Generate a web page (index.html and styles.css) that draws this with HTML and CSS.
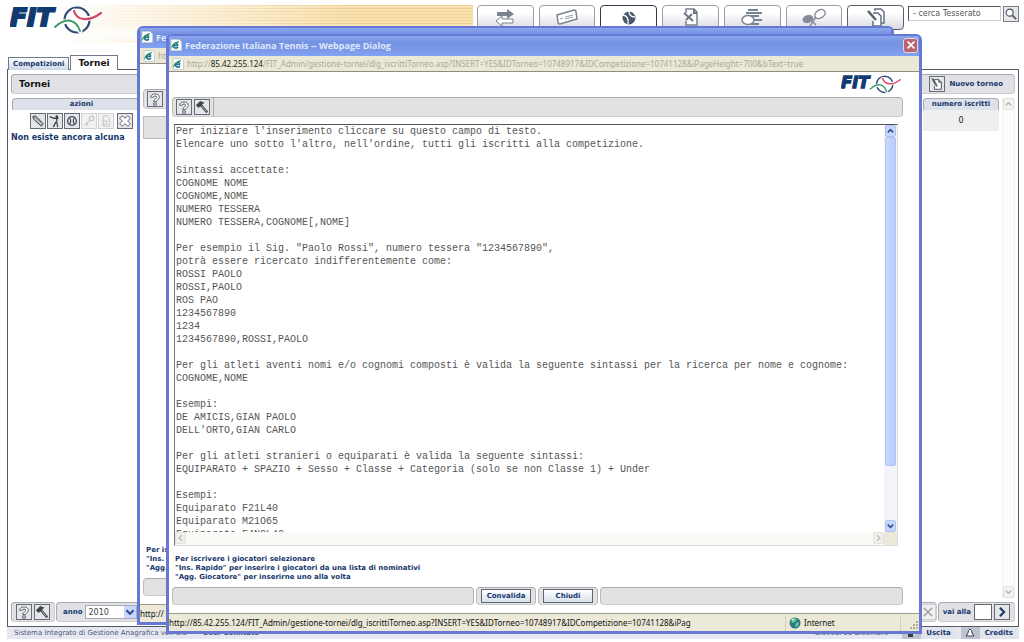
FILE: index.html
```html
<!DOCTYPE html>
<html lang="it">
<head>
<meta charset="utf-8">
<title>Federazione Italiana Tennis</title>
<link rel="stylesheet" href="styles.css">
</head>
<body>
<svg class="defs" aria-hidden="true">
  <symbol id="logo" viewBox="0 0 92 32" overflow="visible">
    <text class="logo-text" x="0" y="21">FIT</text>
    <g fill="none" stroke-linecap="round">
      <circle cx="67" cy="15" r="12.500" stroke="#2f4a78" stroke-width="2.200"/>
      <path d="M46 22C56 13 66 15 70 26M64 6C67 15 78 17 91 8" stroke="#fff" stroke-width="5"/>
      <path d="M45 22C56 12 66 14 70 26" stroke="#3d9a68" stroke-width="2"/>
      <path d="M64 6C67 16 79 17 91 8" stroke="#d34a62" stroke-width="2.200"/>
    </g>
  </symbol>
  <symbol id="help" viewBox="0 0 16 16"><path d="M3 6C3 1 13 1 13 6C13 9 9.500 9 9.500 11H6.500C6.500 8 10 8 10 6C10 4 6 4 6 6ZM6.500 12.500H9.500V15H6.500Z" fill="#fff" stroke="#4c5260"/></symbol>
  <symbol id="hammer" viewBox="0 0 16 16"><path d="M1 6L6 1L11 3L8 5L15 13L13 15L6 7L4 9Z" fill="#3f454f"/><path d="M8 7L13 13" stroke="#fff" stroke-width=".7"/></symbol>
  <symbol id="pencil" viewBox="0 0 16 16"><path d="M2 3L5 2L14 11L12 14L3 6Z" fill="#99a0ab" stroke="#333946"/><path d="M4 5L12 12" stroke="#fff" stroke-width=".8"/></symbol>
  <symbol id="player" viewBox="0 0 16 16"><path d="M2 3L7 5H10V9L11 15M9 9L6 15M10 6L12 4" fill="none" stroke="#343a45" stroke-width="1.300"/><circle cx="10" cy="3" r="1.500" fill="#343a45"/></symbol>
  <symbol id="ball" viewBox="0 0 16 16"><circle cx="8" cy="8" r="5" fill="#e8ebef" stroke="#3c4250" stroke-width="1.500"/><path d="M5 4Q8 8 5 12M11 4Q8 8 11 12" fill="none" stroke="#3c4250" stroke-width="1.400"/></symbol>
  <symbol id="key" viewBox="0 0 16 16"><circle cx="11" cy="5" r="2.500" fill="none" stroke="#c3c5c9" stroke-width="1.300"/><path d="M9 7L3 13M5 11L7 13" stroke="#c3c5c9" stroke-width="1.500"/></symbol>
  <symbol id="sheet" viewBox="0 0 16 16"><path d="M5 2H10L12 5V14H5ZM3 8H9V12H3" fill="none" stroke="#c3c5c9"/></symbol>
  <symbol id="cross" viewBox="0 0 16 16"><path d="M2 5L5 2L8 5L11 2L14 5L11 8L14 11L11 14L8 11L5 14L2 11L5 8Z" fill="#fff" stroke="#4c5260"/></symbol>
  <symbol id="newdoc" viewBox="0 0 16 16"><path d="M5 3H10L13 6V14H5V10M10 3V6H13" fill="#fff" stroke="#3c4250"/><path d="M2 2L4 2L8 9L8 11L6 9Z" fill="#596270" stroke="#3c4250" stroke-width=".6"/></symbol>
  <symbol id="ie" viewBox="0 0 12 12"><path d="M1 .5H9L11.500 3V11.500H1Z" fill="#fff" stroke="#c6cfcf"/><path d="M8 8Q7 9.500 5 9Q3 8 3.500 6Q4.500 4 6.500 4.500Q8 5 7.500 6.500H4" fill="none" stroke="#1f7390" stroke-width="1.500"/><path d="M2 9Q1 8 4 5Q7 2.500 9 3" fill="none" stroke="#2c8f5c" stroke-width="1.100"/></symbol>
  <symbol id="up" viewBox="0 0 10 10"><path d="M2 6.500L5 3.500L8 6.500" fill="none" stroke="currentColor" stroke-width="1.800"/></symbol>
  <symbol id="down" viewBox="0 0 10 10"><path d="M2 3.500L5 6.500L8 3.500" fill="none" stroke="currentColor" stroke-width="1.800"/></symbol>
  <symbol id="left" viewBox="0 0 10 10"><path d="M6.500 2L3.500 5L6.500 8" fill="none" stroke="currentColor" stroke-width="1.500"/></symbol>
  <symbol id="right" viewBox="0 0 10 10"><path d="M3.500 2L6.500 5L3.500 8" fill="none" stroke="currentColor" stroke-width="1.500"/></symbol>
  <symbol id="last" viewBox="0 0 10 10"><path d="M2 2L5 5L2 8M8 2L5 5L8 8" fill="none" stroke="currentColor" stroke-width="1.200"/></symbol>
</svg>

<div class="app">
  <header class="header">
    <div class="brand"><svg class="brand-logo" role="img" aria-label="FIT"><use href="#logo"/></svg></div>
    <nav class="nav" aria-label="Sezioni">
      <button class="nav-tab" aria-label="Trasferimenti"><svg viewBox="0 0 24 18"><path d="M4 4H14V1L21 6L14 11V8H4Z" fill="#7a8291"/><path d="M20 11H9V8L3 13L9 18V15H20Z" fill="#fff" stroke="#7a8291"/></svg></button>
      <button class="nav-tab" aria-label="Tessere"><svg viewBox="0 0 24 18"><path d="M2 7L19 2Q21 2 21 4L22 11L5 16Q3 16 3 14Z" fill="#fff" stroke="#7a8291" stroke-width="1.500"/><path d="M5 11L8 10M10 9L18 7M10 11L18 9" stroke="#a0a6b1" stroke-width="1.200"/></svg></button>
      <button class="nav-tab nav-tab-current" aria-label="Tornei"><svg viewBox="0 0 24 18"><circle cx="12" cy="10" r="6.500" fill="#4a586d"/><path d="M6 7Q12 8 11 16M12 3Q12 9 18 9" fill="none" stroke="#fff" stroke-width="1.300"/></svg></button>
      <button class="nav-tab" aria-label="Documenti"><svg viewBox="0 0 24 18"><path d="M7 5V1H15L18 4V17H7V13" fill="#fff" stroke="#7a8291" stroke-width="1.500"/><path d="M5 5L14 13M13 6L7 12M15 1V5H18" stroke="#6c7585" stroke-width="2" fill="none"/></svg></button>
      <button class="nav-tab" aria-label="Circoli"><svg viewBox="0 0 24 18"><path d="M8 2H18M6 5H22M11 8H19M11 12H22M10 16H19" stroke="#7a8291" stroke-width="2"/><ellipse cx="8" cy="12" rx="6" ry="4.500" fill="#fff" stroke="#7a8291" stroke-width="1.500"/></svg></button>
      <button class="nav-tab" aria-label="Racchette"><svg viewBox="0 0 24 18"><ellipse cx="18" cy="6" rx="5.500" ry="4" fill="#fff" stroke="#858c9a" stroke-width="1.500" transform="rotate(-30 18 6)"/><ellipse cx="6" cy="11" rx="5.500" ry="4" fill="#858c9a" transform="rotate(-15 6 11)"/><path d="M14 9L8 18M10 13L14 17" stroke="#858c9a" stroke-width="1.500"/></svg></button>
      <button class="nav-tab nav-tab-dark" aria-label="Iscrizioni"><svg viewBox="0 0 24 18"><path d="M11 3V1H17L20 4V15H17M9 5H14L17 8V18H9V13" fill="#fff" stroke="#667082" stroke-width="1.500"/><path d="M4 3L12 12" stroke="#566073" stroke-width="2.500"/></svg></button>
    </nav>
    <form class="search">
      <input class="search-input" type="text" value="- cerca Tesserato" aria-label="Cerca Tesserato">
      <button class="search-button" type="button" aria-label="Cerca"><svg viewBox="0 0 16 16"><circle cx="6.500" cy="6.500" r="4" fill="#fff" stroke="#4c5563" stroke-width="1.300"/><path d="M9.500 9.500L14 14" stroke="#4c5563" stroke-width="2"/></svg></button>
    </form>
  </header>

  <div class="page-tabs">
    <button class="page-tab">Competizioni</button>
    <button class="page-tab page-tab-current">Tornei</button>
  </div>

  <main class="panel">
    <div class="panel-title">
      <h1 class="panel-name">Tornei</h1>
      <button class="new-button"><span class="tool"><svg><use href="#newdoc"/></svg></span>Nuovo torneo</button>
    </div>
    <div class="list">
      <table class="grid">
        <thead><tr><th class="col-actions">azioni</th><th class="col-rest"></th><th class="col-count">numero iscritti</th></tr></thead>
        <tbody><tr>
          <td><div class="actions">
            <button class="tool" aria-label="Modifica"><svg><use href="#pencil"/></svg></button>
            <button class="tool" aria-label="Giocatori"><svg><use href="#player"/></svg></button>
            <button class="tool" aria-label="Gare"><svg><use href="#ball"/></svg></button>
            <button class="tool tool-off" aria-label="Chiave" disabled><svg><use href="#key"/></svg></button>
            <button class="tool tool-off" aria-label="Stampa" disabled><svg><use href="#sheet"/></svg></button>
            <button class="tool" aria-label="Elimina"><svg><use href="#cross"/></svg></button>
          </div></td>
          <td></td>
          <td class="count"><span>0</span></td>
        </tr></tbody>
      </table>
      <div class="scroll scroll-off"><svg><use href="#up"/></svg><svg><use href="#down"/></svg></div>
      <p class="empty">Non esiste ancora alcuna</p>
    </div>
    <div class="panel-foot">
      <div class="foot-group">
        <button class="tool" aria-label="Aiuto"><svg><use href="#help"/></svg></button>
        <button class="tool" aria-label="Strumenti"><svg><use href="#hammer"/></svg></button>
      </div>
      <div class="foot-group foot-year">
        <label for="anno">anno</label>
        <div class="year"><select id="anno"><option>2010</option></select><svg><use href="#down"/></svg></div>
      </div>
      <div class="foot-group foot-next"><button class="tool tool-off" aria-label="Ultima" disabled><svg><use href="#last"/></svg></button></div>
      <div class="foot-group">
        <label for="pagina">vai alla</label>
        <input class="page-input" id="pagina" type="text">
        <button class="tool" aria-label="Vai"><svg><use href="#right"/></svg></button>
      </div>
    </div>
  </main>

  <footer class="footer">
    <span class="footer-system">Sistema Integrato di Gestione Anagrafica ver. 3.0 &nbsp; - &nbsp; <b>User Comitato</b></span>
    <span class="footer-date">Giovedì 16 Dicembre</span>
    <a class="footer-link" href="#uscita"><span class="footer-icon"><svg viewBox="0 0 10 10"><path d="M1 2H6V9H1Z" fill="#323a4b"/><path d="M4 5H9M7 3L9 5L7 7" fill="none" stroke="#fff"/></svg></span>Uscita</a>
    <a class="footer-link" href="#credits"><span class="footer-icon"><svg viewBox="0 0 10 10"><path d="M5 1Q7 2 7 5L9 8H1L3 5Q3 2 5 1Z" fill="#fff" stroke="#323a4b"/></svg></span>Credits</a>
  </footer>
</div>

<section class="window window-back" aria-label="Finestra torneo">
  <div class="window-title"><svg><use href="#ie"/></svg><span>Federazione Italiana Tennis</span></div>
  <div class="window-url"><svg><use href="#ie"/></svg><span>http://</span></div>
  <div class="window-body">
    <div class="logo-row"></div>
    <div class="bar bar-tools"><button class="tool" aria-label="Aiuto"><svg><use href="#help"/></svg></button></div>
    <div class="back-row"></div>
    <div class="back-space"></div>
    <p class="hint">Per iscrivere<br>"Ins. Rapido"<br>"Agg. Giocatore"</p>
    <div class="bar bar-plain"></div>
  </div>
  <div class="window-status"><span>http://</span></div>
</section>

<section class="window window-front" role="dialog" aria-label="Federazione Italiana Tennis">
  <div class="window-title">
    <svg><use href="#ie"/></svg><span>Federazione Italiana Tennis -- Webpage Dialog</span>
    <button class="close" aria-label="Chiudi finestra"><svg viewBox="0 0 14 14"><path d="M3 3L11 11M11 3L3 11" stroke="#fff" stroke-width="2"/></svg></button>
  </div>
  <div class="window-url"><svg><use href="#ie"/></svg><span>http://<b>85.42.255.124</b>/FIT_Admin/gestione-tornei/dlg_iscrittiTorneo.asp?INSERT=YES&amp;IDTorneo=10748917&amp;IDCompetizione=10741128&amp;iPageHeight=700&amp;bText=true</span></div>
  <div class="window-body">
    <div class="logo-row"><svg role="img" aria-label="FIT"><use href="#logo"/></svg></div>
    <div class="bar bar-tools">
      <div class="bar-group">
        <button class="tool" aria-label="Aiuto"><svg><use href="#help"/></svg></button>
        <button class="tool" aria-label="Strumenti"><svg><use href="#hammer"/></svg></button>
      </div>
    </div>
    <div class="editor">
      <textarea class="editor-text" wrap="off" spellcheck="false" aria-label="Elenco iscritti">Per iniziare l'inserimento cliccare su questo campo di testo.
Elencare uno sotto l'altro, nell'ordine, tutti gli iscritti alla competizione.

Sintassi accettate:
COGNOME NOME
COGNOME,NOME
NUMERO TESSERA
NUMERO TESSERA,COGNOME[,NOME]

Per esempio il Sig. "Paolo Rossi", numero tessera "1234567890",
potrà essere ricercato indifferentemente come:
ROSSI PAOLO
ROSSI,PAOLO
ROS PAO
1234567890
1234
1234567890,ROSSI,PAOLO

Per gli atleti aventi nomi e/o cognomi composti è valida la seguente sintassi per la ricerca per nome e cognome:
COGNOME,NOME

Esempi:
DE AMICIS,GIAN PAOLO
DELL'ORTO,GIAN CARLO

Per gli atleti stranieri o equiparati è valida la seguente sintassi:
EQUIPARATO + SPAZIO + Sesso + Classe + Categoria (solo se non Classe 1) + Under

Esempi:
Equiparato F21L40
Equiparato M21O65
Equiparato F4NCL40</textarea>
      <div class="scroll scroll-v"><svg><use href="#up"/></svg><div class="thumb"></div><div class="track"></div><svg><use href="#down"/></svg></div>
      <div class="scroll scroll-h"><svg><use href="#left"/></svg><svg><use href="#right"/></svg></div>
      <div class="scroll-corner"></div>
    </div>
    <p class="hint">Per iscrivere i giocatori selezionare<br>"Ins. Rapido" per inserire i giocatori da una lista di nominativi<br>"Agg. Giocatore" per inserirne uno alla volta</p>
    <div class="commands">
      <div class="bar bar-left"></div>
      <div class="bar bar-command"><button class="command">Convalida</button></div>
      <div class="bar bar-command"><button class="command">Chiudi</button></div>
      <div class="bar bar-right"></div>
    </div>
  </div>
  <div class="window-status">
    <span class="status-url">http://85.42.255.124/FIT_Admin/gestione-tornei/dlg_iscrittiTorneo.asp?INSERT=YES&amp;IDTorneo=10748917&amp;IDCompetizione=10741128&amp;iPag</span>
    <span class="zone"><svg viewBox="0 0 12 12"><circle cx="6" cy="6" r="5.500" fill="#2a7b83"/><path d="M2 3Q5 0 8 2L6 5L3 6ZM7 6L10 5L9 9L6 10Z" fill="#6cc79b"/><path d="M3 3L5 2" stroke="#fff"/></svg>Internet</span>
    <svg class="grip" viewBox="0 0 10 10"><path d="M7 1H9M7 4H9M4 4H6M7 7H9M4 7H6M1 7H3" stroke="#b3ae98" stroke-width="2"/></svg>
  </div>
</section>
</body>
</html>
```
FILE: styles.css
```css
* { box-sizing: border-box; }

body {
  margin: 0;
  background: #fff;
  color: #222;
  font-family: "DejaVu Sans", Verdana, sans-serif;
  font-size: 8px;
  overflow: hidden;
}

button, input, select, textarea { font: inherit; color: inherit; margin: 0; padding: 0; }
h1, p { margin: 0; }
svg { display: block; flex: none; }
.defs { position: absolute; width: 0; height: 0; }

.logo-text {
  font: italic bold 25px "DejaVu Sans", sans-serif;
  fill: #123a72;
  stroke: #123a72;
  stroke-width: 2px;
}

/* Application page */
.app { display: flex; flex-direction: column; height: 100vh; padding: 0 5px 3px 7px; }

.header { display: flex; align-items: flex-start; height: 55px; padding-top: 5px; gap: 4px; margin-left: -7px; }
.brand {
  flex: 1;
  height: 38px;
  padding-left: 10px;
  background:
    linear-gradient(to right, #fff 12%, transparent 75%),
    linear-gradient(to bottom, transparent 55%, #ffffffcc 75%, transparent),
    repeating-linear-gradient(#f0d08f 0 1px, #f8e2b4 1px 3px);
}
.brand-logo { width: 92px; height: 32px; }

.nav { display: flex; gap: 5px; width: 427px; }
.nav-tab {
  display: flex;
  justify-content: center;
  flex: 1;
  height: 25px;
  padding-top: 2px;
  border: 1px solid #9b9ea7;
  border-radius: 4px;
  background: linear-gradient(#fff 30%, #d9dae0);
}
.nav-tab svg { width: 24px; height: 18px; }
.nav-tab-current { background: #fff; border-color: #343a49; }
.nav-tab-dark { border-color: #5a606e; }

.search { display: flex; gap: 2px; padding-top: 1px; }
.search-input { width: 93px; height: 15px; padding: 0 0 1px 4px; border: 1px solid #777; border-color: #555 #ccc #ccc #555; background: #fff; color: #555; font-size: 8px; }
.search-button { width: 16px; height: 16px; border: 1px solid #777c88; background: #e7e8ec; }
.search-button svg { width: 14px; height: 14px; }

.page-tabs { position: relative; z-index: 1; display: flex; align-items: flex-end; gap: 1px; padding-left: 1px; height: 15px; }
.page-tab {
  height: 13px;
  padding: 0 4px;
  border: 1px solid #72798a;
  border-bottom: 0;
  background: linear-gradient(#fff, #ccd6ea);
  color: #17376b;
  font-size: 7px;
  font-weight: bold;
}
.page-tab-current { height: 15px; background: #fff; color: #111; font-size: 9px; padding: 0 7px; }

.panel { flex: 1; display: flex; flex-direction: column; border: 1px solid #555a66; margin-top: -1px; padding: 4px 3px; min-height: 0; }
.panel-title {
  display: flex;
  justify-content: space-between;
  align-items: center;
  height: 20px;
  padding: 0 11px 0 7px;
  border: 1px solid #a9abb2;
  border-color: #a9abb2 #c4c5ca #ccc #a9abb2;
  border-radius: 4px;
  background: #e0e1e4;
}
.panel-name { font-size: 9px; color: #111; }
.new-button { display: flex; align-items: center; gap: 4px; border: 0; background: none; color: #17376b; font-size: 7px; font-weight: bold; }

.tool { display: flex; align-items: center; justify-content: center; width: 16px; height: 16px; border: 1px solid #676b75; background: #e4e5e8; }
.tool svg { width: 14px; height: 14px; }
.tool-off { border-color: #d0d1d4; background: #f1f1f2; color: #aaa; }

.list { flex: 1; display: grid; grid-template-columns: 1fr 13px; grid-template-rows: auto 1fr; column-gap: 2px; padding-top: 4px; }
.grid { width: 100%; border-collapse: separate; border-spacing: 1px 0; table-layout: fixed; }
.grid th { height: 12px; padding: 0; border: 1px solid #a9abb2; border-bottom: 0; border-radius: 4px 4px 0 0; background: #dde1ea; color: #17376b; font-size: 7px; line-height: 11px; }
.grid td { padding: 0; vertical-align: top; }
.grid .col-actions { width: 139px; }
.grid .col-count { width: 76px; }
.actions { display: flex; justify-content: flex-end; gap: 1px; padding: 3px 18px 0 0; }
.actions .tool:last-child { margin-left: 2px; }
.grid .count { height: 21px; background: #efefef; text-align: center; vertical-align: middle; }
.empty { color: #17376b; font-weight: bold; line-height: 14px; }
.list .scroll { grid-column: 2; grid-row: 1 / 3; }

.scroll { display: flex; color: #33518f; }
.scroll svg { width: 11px; height: 12px; background: #c8d6fb; border: 1px solid #b2c2f0; border-radius: 2px; }
.scroll-off { flex-direction: column; justify-content: space-between; align-items: center; background: #fcfcfb; color: #bbb; border: 1px solid #f0f0ee; border-width: 0 1px; }
.scroll-off svg { background: #f3f3ef; border-color: #e2e2dc; }

.panel-foot { display: flex; gap: 1px; height: 20px; margin-top: 4px; }
.foot-group { display: flex; align-items: center; gap: 2px; padding: 0 4px; border: 1px solid #a9abb2; border-color: #a9abb2 #ccc #ccc #a9abb2; border-radius: 4px; background: #e0e1e4; color: #17376b; font-size: 7px; font-weight: bold; }
.foot-year { flex: 1; padding-left: 6px; gap: 1px; }
.foot-group label { padding-right: 1px; }
.foot-next { padding-right: 0; }
.year { display: flex; align-items: center; width: 52px; height: 14px; background: #fff; border: 1px solid #aab; font-size: 8px; font-weight: normal; color: #444; }
.year select { flex: 1; width: 38px; border: 0; background: none; appearance: none; padding-left: 3px; }
.year svg { width: 12px; height: 12px; background: #c8d6fb; color: #33518f; }
.page-input { width: 18px; height: 16px; border: 1px solid #666; background: #fff; }

.footer { display: flex; align-items: center; gap: 4px; height: 12px; padding-left: 7px; background: #e6e8f1; color: #4a5876; font-size: 7px; }
.footer-system { flex: 1; }
.footer-date { padding-right: 10px; }
.footer-link { display: flex; align-items: center; gap: 5px; height: 12px; padding-right: 6px; color: #17376b; font-weight: bold; text-decoration: none; background: #e2e4ec; }
.footer-icon { display: flex; align-items: center; justify-content: center; width: 19px; height: 12px; background: #bdc3d1; }
.footer-icon svg { width: 10px; height: 10px; }

/* Browser dialog windows */
.window {
  position: absolute;
  display: flex;
  flex-direction: column;
  border: 3px solid #6678d4;
  border-top-width: 2px;
  border-radius: 6px 6px 0 0;
  background: #fff;
  overflow: hidden;
}
.window-back { inset: 26px 130px 17px 137px; }
.window-front { inset: 34px 102px 8px 166px; }

.window-title {
  display: flex;
  align-items: center;
  gap: 3px;
  height: 20px;
  padding: 0 1px 2px 1px;
  background: linear-gradient(#8aa6ee, #7593e3 30%, #7b99e8 70%, #82a4f4);
  color: #dfe8fc;
  font: bold 9px "Open Sans", "Noto Sans", sans-serif;
  font-variant-ligatures: none;
  white-space: nowrap;
}
.window-title svg { width: 12px; height: 12px; }
.close { display: flex; align-items: center; justify-content: center; width: 15px; height: 15px; margin-left: auto; border: 1px solid #e9d6e2; border-radius: 3px; background: #b96570; }
.close svg { width: 12px; height: 12px; }

.window-url {
  display: flex;
  align-items: center;
  gap: 3px;
  height: 16px;
  padding-left: 3px;
  border-bottom: 1px solid #8f8d80;
  background: #ebe9d6;
  color: #aaa899;
  font: 8px "Noto Sans", "Open Sans", sans-serif;
  white-space: nowrap;
}
.window-url svg { width: 12px; height: 12px; }
.window-url b { font-weight: normal; color: #222; }

.window-body { flex: 1; display: flex; flex-direction: column; padding: 0 16px 8px 3px; min-height: 0; }
.logo-row { display: flex; justify-content: flex-end; height: 25px; padding: 2px 2px 0 0; }
.logo-row svg { width: 60px; height: 22px; }

.bar { border: 1px solid #a9abb2; border-color: #a9abb2 #b4b6bc #ccc #bbb; border-radius: 4px; background: #e2e2e2; }
.bar-tools { display: flex; align-items: center; height: 20px; padding-left: 3px; }
.bar-group { display: flex; gap: 2px; height: 18px; padding: 1px 3px 0 0; border-right: 1px solid #a9abb2; }

.editor {
  flex: 1;
  display: grid;
  grid-template-columns: 1fr 13px;
  grid-template-rows: 1fr 13px;
  margin: 7px 5px 7px 2px;
  border: 1px solid #777;
  border-color: #555 #ddd #ddd #777;
  min-height: 0;
}
.editor-text {
  width: 100%;
  height: 100%;
  padding: 0 0 0 1px;
  border: 0;
  outline: 0;
  resize: none;
  overflow: hidden;
  background: #fff;
  color: #555;
  font: 10px/13px "Liberation Mono", "Courier New", monospace;
}
.scroll-v { flex-direction: column; align-items: center; background: #f3f4fa; }
.thumb { flex: 328; width: 11px; border: 1px solid #b2c2f0; border-radius: 2px; background: linear-gradient(to right, #cbd8fd, #b9cbfb); }
.track { flex: 54; }
.scroll-h { justify-content: space-between; background: #fafaf7; color: #c0c0b8; }
.scroll-h svg { background: #f0f0ea; border-color: #e2e2dc; }
.scroll-corner { background: #ece9d8; }

.hint { height: 34px; padding: 2px 0 0 3px; color: #17376b; font-size: 7px; font-weight: bold; line-height: 9px; white-space: nowrap; }

.commands { display: flex; gap: 2px; height: 18px; }
.bar-left { flex: 304; }
.bar-right { flex: 305; }
.bar-command { display: flex; align-items: center; padding: 0 4px; }
.command { width: 50px; height: 14px; border: 1px solid #5f6673; background: linear-gradient(#fff, #d8e0ef); color: #17376b; font-size: 7px; font-weight: bold; }

.window-status {
  display: flex;
  align-items: center;
  height: 18px;
  border-top: 1px solid #9c9a8a;
  background: #ece9d8;
  color: #111;
  font: 8px "Noto Sans", "Open Sans", sans-serif;
  white-space: nowrap;
}
.status-url { flex: 1; }
.zone { display: flex; align-items: center; gap: 3px; width: 116px; height: 16px; padding-left: 3px; border-left: 1px solid #d5d1bd; border-right: 1px solid #d5d1bd; }
.zone svg { width: 12px; height: 12px; }
.grip { width: 10px; height: 10px; margin-left: 8px; align-self: flex-end; }

.back-row { height: 23px; margin-top: 7px; border: 1px solid #bbb; background: #e2e2e2; flex: none; }
.back-space { flex: 1; }
.bar-plain { height: 18px; }
```
